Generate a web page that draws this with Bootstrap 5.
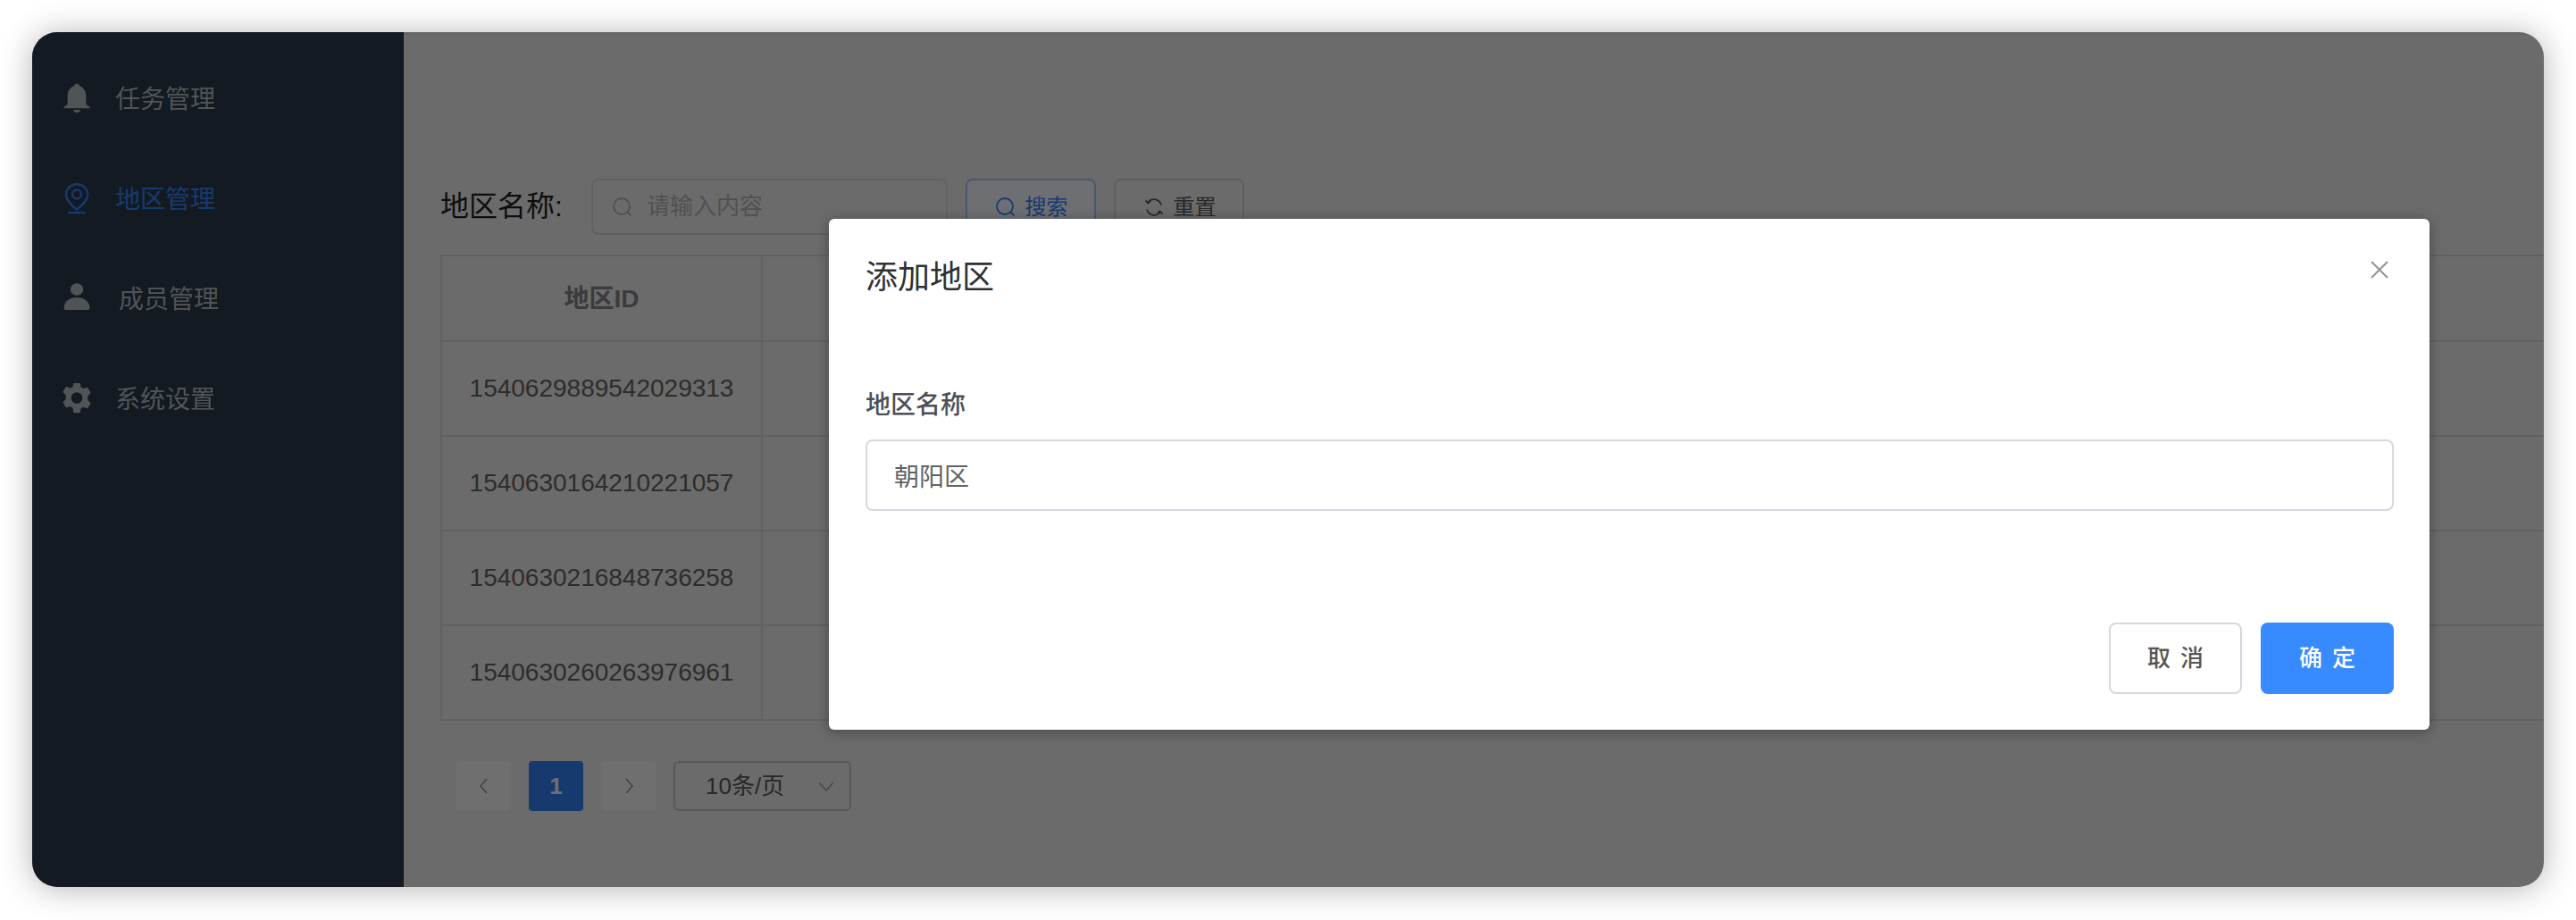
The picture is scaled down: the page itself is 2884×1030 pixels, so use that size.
<!DOCTYPE html>
<html lang="zh-CN">
  <head>
    <meta charset="UTF-8" />
    <title>地区管理</title>
    <link href="https://cdn.jsdelivr.net/npm/bootstrap@5.3.0/dist/css/bootstrap.min.css" rel="stylesheet" />
    <style>
      html, body {
        height: 1030px;
        overflow: hidden;
        background: #fff;
      }
      body {
        font-family: "Liberation Sans", "Noto Sans CJK SC", sans-serif;
        padding: 36px;
      }
      .app-window {
        position: relative;
        height: 957px;
        border-radius: 28px;
        overflow: hidden;
        background: #d6d6d6;
      }
      .app-shadow {
        border-radius: 28px;
        box-shadow: 0 2px 36px rgba(0, 0, 0, 0.3);
      }
      .side-menu {
        width: 416px;
        flex: none;
        background: #263444;
        padding-top: 18px;
      }
      .side-item {
        height: 112px;
        padding-left: 32px;
        gap: 25px;
        color: #a2a8ae;
        font-size: 28px;
      }
      .side-item.is-active {
        color: #2f75dd;
      }
      .side-item svg {
        width: 36px;
        height: 36px;
        flex: none;
      }
      .side-item span {
        position: relative;
        top: 2px;
      }
      .side-item .shifted {
        margin-left: 4px;
      }
      .main-area {
        flex: 1;
        min-width: 0;
        padding: 160px 0 0 41px;
        border-top: 4px solid #cecece;
      }
      .search-label {
        font-size: 32px;
        color: #1c1c1c;
        width: 169px;
        flex: none;
        margin-top: -2px;
      }
      .search-box {
        width: 399px;
        height: 63px;
        border: 2px solid #c2c2c6;
        border-radius: 8px;
        padding-left: 20px;
        gap: 14px;
        font-size: 26px;
        color: #a2a2a6;
      }
      .search-box svg, .tool-btn svg {
        width: 26px;
        height: 26px;
      }
      .tool-btn {
        width: 146px;
        height: 63px;
        padding: 0;
        margin-left: 20px;
        font-size: 24px;
        border-radius: 8px;
        gap: 9px;
        border: 2px solid #bcbcc0;
        background: transparent;
        color: #505050;
      }
      .tool-btn.is-blue {
        border-color: #94aede;
        background: #dadee6;
        color: #2f75dd;
      }
      .area-table {
        width: 2400px;
        margin: 22px 0 0;
        border-color: #c2c3c7;
        --bs-table-bg: transparent;
        font-size: 28px;
        color: #5a5a5a;
      }
      .area-table th, .area-table td {
        text-align: center;
        vertical-align: middle;
        padding: 0;
        border-width: 2px;
      }
      .area-table th {
        height: 96px;
        padding-top: 2px;
        color: #76767a;
      }
      .area-table td {
        height: 106px;
      }
      .area-table .id-col {
        width: 359px;
      }
      .pager-row {
        margin: 45px 0 0 18px;
        gap: 20px;
      }
      .page-cell {
        width: 61px;
        height: 56px;
        border-radius: 4px;
        background: #dedede;
        color: #888;
        font-size: 26px;
        font-weight: 700;
      }
      .page-cell svg {
        width: 22px;
        height: 22px;
      }
      .page-cell.is-current {
        background: #2f75dd;
        color: #dcdcdc;
      }
      .size-select {
        width: 199px;
        height: 56px;
        border: 2px solid #b0b0b4;
        border-radius: 6px;
        font-size: 26px;
        color: #505050;
        padding: 0 14px 0 34px;
      }
      .size-select svg {
        width: 24px;
        height: 24px;
        margin-left: auto;
      }
      .page-mask {
        position: absolute;
        inset: 0;
        background: rgba(0, 0, 0, 0.5);
      }
      .area-dialog {
        position: absolute;
        left: 892px;
        top: 209px;
        width: 1792px;
        height: 572px;
        border: 0;
        border-radius: 6px;
        background: #fff;
        box-shadow: 0 2px 14px rgba(0, 0, 0, 0.35);
      }
      .area-dialog .modal-header {
        border: 0;
        padding: 42px 40px 0 41px;
        align-items: flex-start;
      }
      .area-dialog .modal-title {
        font-size: 36px;
        line-height: 48px;
        color: #303133;
        font-weight: 400;
      }
      .close-x {
        width: 24px;
        height: 24px;
        padding: 0;
        margin: 3px 4px 0 0;
        border: 0;
        background: none;
        line-height: 0;
      }
      .area-dialog .modal-body {
        padding: 99px 40px 0 41px;
      }
      .area-dialog .form-label {
        font-size: 28px;
        line-height: 40px;
        font-weight: 500;
        color: #4d4f55;
        margin-bottom: 18px;
      }
      .area-dialog .form-control {
        height: 80px;
        font-size: 28px;
        color: #606266;
        border: 2px solid #d6d8df;
        border-radius: 8px;
        padding: 0 30px;
      }
      .area-dialog .modal-footer {
        border: 0;
        padding: 0 40px 40px;
        gap: 21px;
      }
      .dialog-btn {
        width: 149px;
        height: 80px;
        margin: 0 !important;
        padding: 0;
        font-size: 26px;
        font-weight: 500;
        word-spacing: 4px;
        border-radius: 8px;
      }
      .dialog-btn.is-plain {
        border: 2px solid #d6d8df;
        background: #fff;
        color: #555;
      }
      .dialog-btn.is-primary {
        border: 0;
        background: #388aff;
        color: #fff;
      }
    </style>
  </head>

  <body>
    <div class="app-shadow">
      <div class="app-window d-flex">
        <!-- Sidebar -->
        <nav class="side-menu d-flex flex-column">
          <a class="side-item d-flex align-items-center text-decoration-none">
            <svg viewBox="0 0 40 40" fill="currentColor">
              <path d="M20 2c1.700 0 3 1.200 3.300 2.800C28.500 6.300 31.500 11.500 31.500 17v10.500l3 2.500h1.500v2.500H4V30h1.500l3-2.500V17c0-5.500 3-10.700 8.200-12.200C17 3.200 18.300 2 20 2z" />
              <path d="M15.500 34.500h9c-.6 2.200-2.300 3.500-4.500 3.500s-3.900-1.300-4.500-3.500z" />
            </svg>
            <span>任务管理</span>
          </a>
          <a class="side-item is-active d-flex align-items-center text-decoration-none">
            <svg viewBox="0 0 40 40" fill="none" stroke="currentColor" stroke-width="2.600">
              <path d="M20 34C13 28 6.500 22 6.500 15.500 6.500 8 12.500 2.500 20 2.500S33.500 8 33.500 15.500C33.500 22 27 28 20 34z" />
              <circle cx="20" cy="15" r="5.500" />
              <path d="M9 38h22" />
            </svg>
            <span>地区管理</span>
          </a>
          <a class="side-item d-flex align-items-center text-decoration-none">
            <svg viewBox="0 0 40 40" fill="currentColor">
              <ellipse cx="20" cy="9" rx="8" ry="7.500" />
              <path d="M4 32c0-8 7-13 16-13s16 5 16 13c0 1.200-.8 2.500-2 2.500H6c-1.200 0-2-1.300-2-2.500z" />
            </svg>
            <span class="shifted">成员管理</span>
          </a>
          <a class="side-item d-flex align-items-center text-decoration-none">
            <svg viewBox="0 0 40 40" fill="currentColor">
              <path fill-rule="evenodd" d="M16 1h8l1.200 5 3.300 1.900 4.900-1.500 4 6.900-3.700 3.500v5.400l3.700 3.500-4 6.900-4.900-1.500L25.200 32 24 38h-8l-1.200-6-3.300-1.900-4.900 1.500-4-6.900 3.700-3.500v-5.400l-3.700-3.500 4-6.900 4.900 1.500L14.800 6zM20 12.500a7 7 0 1 0 0 14 7 7 0 0 0 0-14z" />
            </svg>
            <span>系统设置</span>
          </a>
        </nav>

        <!-- Region list -->
        <main class="main-area">
          <div class="d-flex align-items-center">
            <span class="search-label">地区名称:</span>
            <div class="search-box d-flex align-items-center">
              <svg viewBox="0 0 26 26" fill="none" stroke="currentColor" stroke-width="1.800">
                <circle cx="12" cy="12" r="9" /><path d="M19 19l3.500 3.500" />
              </svg>
              <span>请输入内容</span>
            </div>
            <button class="tool-btn is-blue btn d-flex align-items-center justify-content-center" type="button">
              <svg viewBox="0 0 26 26" fill="none" stroke="currentColor" stroke-width="1.800">
                <circle cx="12" cy="12" r="9" /><path d="M19 19l3.500 3.500" />
              </svg>
              搜索
            </button>
            <button class="tool-btn btn d-flex align-items-center justify-content-center" type="button">
              <svg viewBox="0 0 26 26" fill="none" stroke="currentColor" stroke-width="1.800">
                <path d="M21 10.500A8.500 8.500 0 0 0 6.500 7M5 15.500A8.500 8.500 0 0 0 19.500 19" /><path d="M3.500 5.500l3 3 2.500-2.500M22.500 20.500l-3-3-2.500 2.500" />
              </svg>
              重置
            </button>
          </div>

          <table class="area-table table table-bordered">
            <thead>
              <tr><th class="id-col">地区ID</th><th></th></tr>
            </thead>
            <tbody>
              <tr><td>1540629889542029313</td><td></td></tr>
              <tr><td>1540630164210221057</td><td></td></tr>
              <tr><td>1540630216848736258</td><td></td></tr>
              <tr><td>1540630260263976961</td><td></td></tr>
            </tbody>
          </table>

          <div class="pager-row d-flex align-items-center">
            <span class="page-cell d-flex align-items-center justify-content-center">
              <svg viewBox="0 0 22 22" fill="none" stroke="currentColor" stroke-width="1.600"><path d="M14 3l-7 8 7 8" /></svg>
            </span>
            <span class="page-cell is-current d-flex align-items-center justify-content-center">1</span>
            <span class="page-cell d-flex align-items-center justify-content-center">
              <svg viewBox="0 0 22 22" fill="none" stroke="currentColor" stroke-width="1.600"><path d="M8 3l7 8-7 8" /></svg>
            </span>
            <div class="size-select d-flex align-items-center">
              <span>10条/页</span>
              <svg viewBox="0 0 24 24" fill="none" stroke="#96969a" stroke-width="1.600"><path d="M4 8l8 9 8-9" /></svg>
            </div>
          </div>
        </main>

        <!-- Dialog over the dimmed page -->
        <div class="page-mask"></div>
        <div class="area-dialog modal-content d-flex flex-column">
          <div class="modal-header">
            <h5 class="modal-title">添加地区</h5>
            <button class="close-x ms-auto" type="button" aria-label="close">
              <svg viewBox="0 0 24 24" width="24" height="24" fill="none" stroke="#909399" stroke-width="2"><path d="M3 3l18 18M21 3L3 21" /></svg>
            </button>
          </div>
          <div class="modal-body">
            <label class="form-label d-block">地区名称</label>
            <input class="form-control" type="text" value="朝阳区" />
          </div>
          <div class="modal-footer">
            <button class="dialog-btn is-plain btn" type="button">取 消</button>
            <button class="dialog-btn is-primary btn" type="button">确 定</button>
          </div>
        </div>
      </div>
    </div>
  </body>
</html>
